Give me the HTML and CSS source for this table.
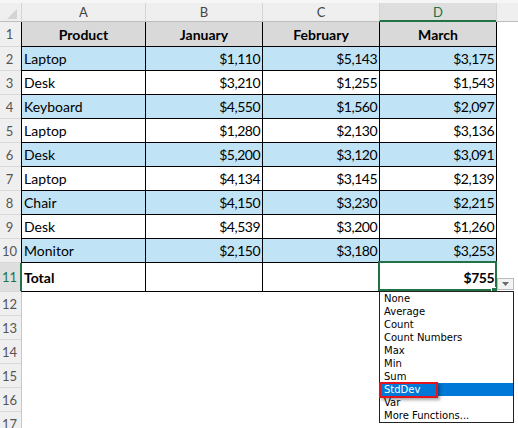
FILE: index.html
```html
<!DOCTYPE html>
<html>
<head>
<meta charset="utf-8">
<link rel="stylesheet" href="styles.css">
</head>
<body>
<div class="sheet">
  <div class="topbar"></div>
  <div class="colheads">
    <div class="corner"><svg width="21" height="19" viewBox="0 0 21 19"><polygon points="7,16 17,16 17,6" fill="#d4d4d4"/></svg></div>
    <div class="ch wa">A</div>
    <div class="ch wn">B</div>
    <div class="ch wn">C</div>
    <div class="ch wn sel">D</div>
    <div class="ch rest"></div>
  </div>

  <div class="row first">
    <div class="rh">1</div>
    <div class="c wa hdr">Product</div>
    <div class="c wn hdr">January</div>
    <div class="c wn hdr">February</div>
    <div class="c wd hdr">March</div>
  </div>
  <div class="row blue">
    <div class="rh">2</div>
    <div class="c wa">Laptop</div><div class="c wn num">$1,110</div><div class="c wn num">$5,143</div><div class="c wd num">$3,175</div>
  </div>
  <div class="row">
    <div class="rh">3</div>
    <div class="c wa">Desk</div><div class="c wn num">$3,210</div><div class="c wn num">$1,255</div><div class="c wd num">$1,543</div>
  </div>
  <div class="row blue">
    <div class="rh">4</div>
    <div class="c wa">Keyboard</div><div class="c wn num">$4,550</div><div class="c wn num">$1,560</div><div class="c wd num">$2,097</div>
  </div>
  <div class="row">
    <div class="rh">5</div>
    <div class="c wa">Laptop</div><div class="c wn num">$1,280</div><div class="c wn num">$2,130</div><div class="c wd num">$3,136</div>
  </div>
  <div class="row blue">
    <div class="rh">6</div>
    <div class="c wa">Desk</div><div class="c wn num">$5,200</div><div class="c wn num">$3,120</div><div class="c wd num">$3,091</div>
  </div>
  <div class="row">
    <div class="rh">7</div>
    <div class="c wa">Laptop</div><div class="c wn num">$4,134</div><div class="c wn num">$3,145</div><div class="c wd num">$2,139</div>
  </div>
  <div class="row blue">
    <div class="rh">8</div>
    <div class="c wa">Chair</div><div class="c wn num">$4,150</div><div class="c wn num">$3,230</div><div class="c wd num">$2,215</div>
  </div>
  <div class="row">
    <div class="rh">9</div>
    <div class="c wa">Desk</div><div class="c wn num">$4,539</div><div class="c wn num">$3,200</div><div class="c wd num">$1,260</div>
  </div>
  <div class="row blue">
    <div class="rh">10</div>
    <div class="c wa">Monitor</div><div class="c wn num">$2,150</div><div class="c wn num">$3,180</div><div class="c wd num">$3,253</div>
  </div>
  <div class="row total">
    <div class="rh selrow">11</div>
    <div class="c wa bold selleft">Total</div>
    <div class="c wn"></div>
    <div class="c wn"></div>
    <div class="c wd num bold active">$755
      <div class="selbox"></div>
      <div class="handle"></div>
      <div class="ddbtn"><svg width="7" height="4" viewBox="0 0 7 4"><polygon points="0,0 7,0 3.5,4" fill="#6b6b6b"/></svg></div>
      <ul class="ddlist">
        <li>None</li>
        <li>Average</li>
        <li>Count</li>
        <li>Count Numbers</li>
        <li>Max</li>
        <li>Min</li>
        <li>Sum</li>
        <li class="hl">StdDev</li>
        <li>Var</li>
        <li>More Functions...</li>
      </ul>
      <div class="redbox"></div>
    </div>
  </div>
  <div class="row"><div class="rh">12</div><div class="fill"></div></div>
  <div class="row"><div class="rh">13</div><div class="fill"></div></div>
  <div class="row"><div class="rh">14</div><div class="fill"></div></div>
  <div class="row"><div class="rh">15</div><div class="fill"></div></div>
  <div class="row"><div class="rh">16</div><div class="fill"></div></div>
  <div class="row"><div class="rh">17</div><div class="fill"></div></div>
</div>
</body>
</html>
```
FILE: styles.css
```css
html, body {
  margin: 0;
  padding: 0;
  background: #fff;
}
body {
  font-family: Lato, "Liberation Sans", sans-serif;
  font-size: 14px;
  color: #000;
}
.sheet {
  width: 518px;
  height: 428px;
  overflow: hidden;
  position: relative;
}
.topbar {
  height: 3px;
  background: #f6f6f6;
}
.colheads {
  display: flex;
  height: 19px;
  background: #efefef;
}
.corner {
  width: 21px;
  flex: none;
  box-sizing: border-box;
  border-bottom: 1px solid #bdbdbd;
}
.corner svg { display: block; }
.ch {
  box-sizing: border-box;
  height: 19px;
  flex: none;
  border-left: 1px solid #d4d4d4;
  border-bottom: 1px solid #bdbdbd;
  text-align: center;
  line-height: 18px;
  font-size: 13px;
  color: #444;
}
.ch.rest { flex: 1; }
.ch.sel {
  background: #dedede;
  color: #217346;
  border-bottom: 2px solid #217346;
}
.wa { width: 124px; }
.wn { width: 117px; }
.wd { width: 118px; }

.row {
  display: flex;
  height: 24px;
}
.row.first { height: 25px; }
.row.total { height: 29px; }

.rh {
  width: 21px;
  flex: none;
  box-sizing: border-box;
  padding-right: 2px;
  background: #efefef;
  border-bottom: 1px solid #d9d9d9;
  text-align: center;
  font-size: 13px;
  color: #555;
  display: flex;
  align-items: center;
  justify-content: center;
}
.rh.selrow {
  background: #dedede;
  color: #217346;
  box-shadow: inset -1px 0 0 #217346;
}
.c {
  flex: none;
  box-sizing: border-box;
  border-left: 1px solid #000;
  border-bottom: 1px solid #000;
  padding: 0 2px;
  white-space: nowrap;
  display: flex;
  align-items: center;
}
.c.wd { border-right: 1px solid #000; }
.c.num {
  justify-content: flex-end;
  letter-spacing: -0.5px;
}
.c.hdr {
  background: #d9d9d9;
  font-weight: bold;
  justify-content: center;
}
.c.bold { font-weight: bold; }
.blue .c { background: #c0e4f5; }
.c.selleft { border-left-color: #217346; }
.fill {
  flex: 1;
  border-left: 1px solid #c8c8c8;
}

.active {
  position: relative;
  z-index: 2;
}
.selbox {
  position: absolute;
  left: -2px;
  top: -2px;
  width: 119px;
  height: 30px;
  box-sizing: border-box;
  border: 2px solid #217346;
}
.handle {
  position: absolute;
  left: 112px;
  top: 25px;
  width: 5px;
  height: 5px;
  background: #217346;
  box-shadow: -1px -1px 0 #fff;
}
.ddbtn {
  position: absolute;
  left: 117px;
  top: 15px;
  width: 17px;
  height: 12px;
  box-sizing: border-box;
  background: #f3f3f3;
  border: 1px solid #bcbcbc;
  display: flex;
  align-items: center;
  justify-content: center;
}
.ddbtn svg { display: block; }
.ddlist {
  position: absolute;
  left: -1px;
  top: 28px;
  width: 135px;
  height: 132px;
  box-sizing: border-box;
  margin: 0;
  padding: 0;
  list-style: none;
  background: #fff;
  border: 1px solid #222;
  font-family: "DejaVu Sans", sans-serif;
  font-weight: normal;
  font-size: 10px;
  letter-spacing: 0;
  color: #000;
}
.ddlist li {
  height: 13px;
  line-height: 14px;
  padding-left: 4px;
  white-space: nowrap;
}
.ddlist li.hl {
  background: #0078d7;
  color: #fff;
}
.redbox {
  position: absolute;
  left: -1px;
  top: 119px;
  width: 59px;
  height: 16px;
  box-sizing: border-box;
  border: 2px solid #e5141c;
  box-shadow: 2px 2px 3px rgba(0, 0, 0, 0.35);
}
```
